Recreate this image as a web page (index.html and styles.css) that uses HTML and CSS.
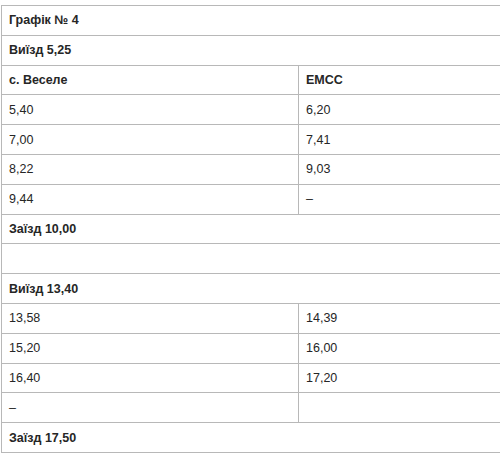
FILE: index.html
```html
<!DOCTYPE html>
<html lang="uk">
<head>
<meta charset="utf-8">
<title>Графік № 4</title>
<link rel="stylesheet" href="styles.css">
</head>
<body>
<div class="wrap">
<table class="schedule">
  <colgroup><col class="col-left"><col class="col-right"></colgroup>
  <tbody>
    <tr><td colspan="2" class="b">Графік № 4</td></tr>
    <tr><td colspan="2" class="b">Виїзд 5,25</td></tr>
    <tr><td class="b left">с. Веселе</td><td class="b">ЕМСС</td></tr>
    <tr><td class="left">5,40</td><td>6,20</td></tr>
    <tr><td class="left">7,00</td><td>7,41</td></tr>
    <tr><td class="left">8,22</td><td>9,03</td></tr>
    <tr><td class="left">9,44</td><td>–</td></tr>
    <tr><td colspan="2" class="b">Заїзд 10,00</td></tr>
    <tr><td colspan="2"></td></tr>
    <tr><td colspan="2" class="b">Виїзд 13,40</td></tr>
    <tr><td class="left">13,58</td><td>14,39</td></tr>
    <tr><td class="left">15,20</td><td>16,00</td></tr>
    <tr><td class="left">16,40</td><td>17,20</td></tr>
    <tr><td class="left">–</td><td></td></tr>
    <tr><td colspan="2" class="b">Заїзд 17,50</td></tr>
  </tbody>
</table>
</div>
</body>
</html>
```

FILE: styles.css
```css
html, body {
  margin: 0;
  padding: 0;
  background: #fff;
  overflow: hidden;
}
.wrap {
  padding: 5px 0 0 1px;
}
.schedule {
  border-collapse: collapse;
  width: 499px;
  table-layout: fixed;
  font-family: "Liberation Sans", Arial, sans-serif;
  font-size: 12.5px;
  color: #262626;
}
.col-left {
  width: 297px;
}
.schedule td {
  border: 1px solid #b8b8b8;
  border-right: 0;
  height: 29.8px;
  box-sizing: border-box;
  padding: 0 7px;
  vertical-align: middle;
}
.schedule td.left {
  border-right: 1px solid #b8b8b8;
}
.schedule td.b {
  font-weight: bold;
}
```
